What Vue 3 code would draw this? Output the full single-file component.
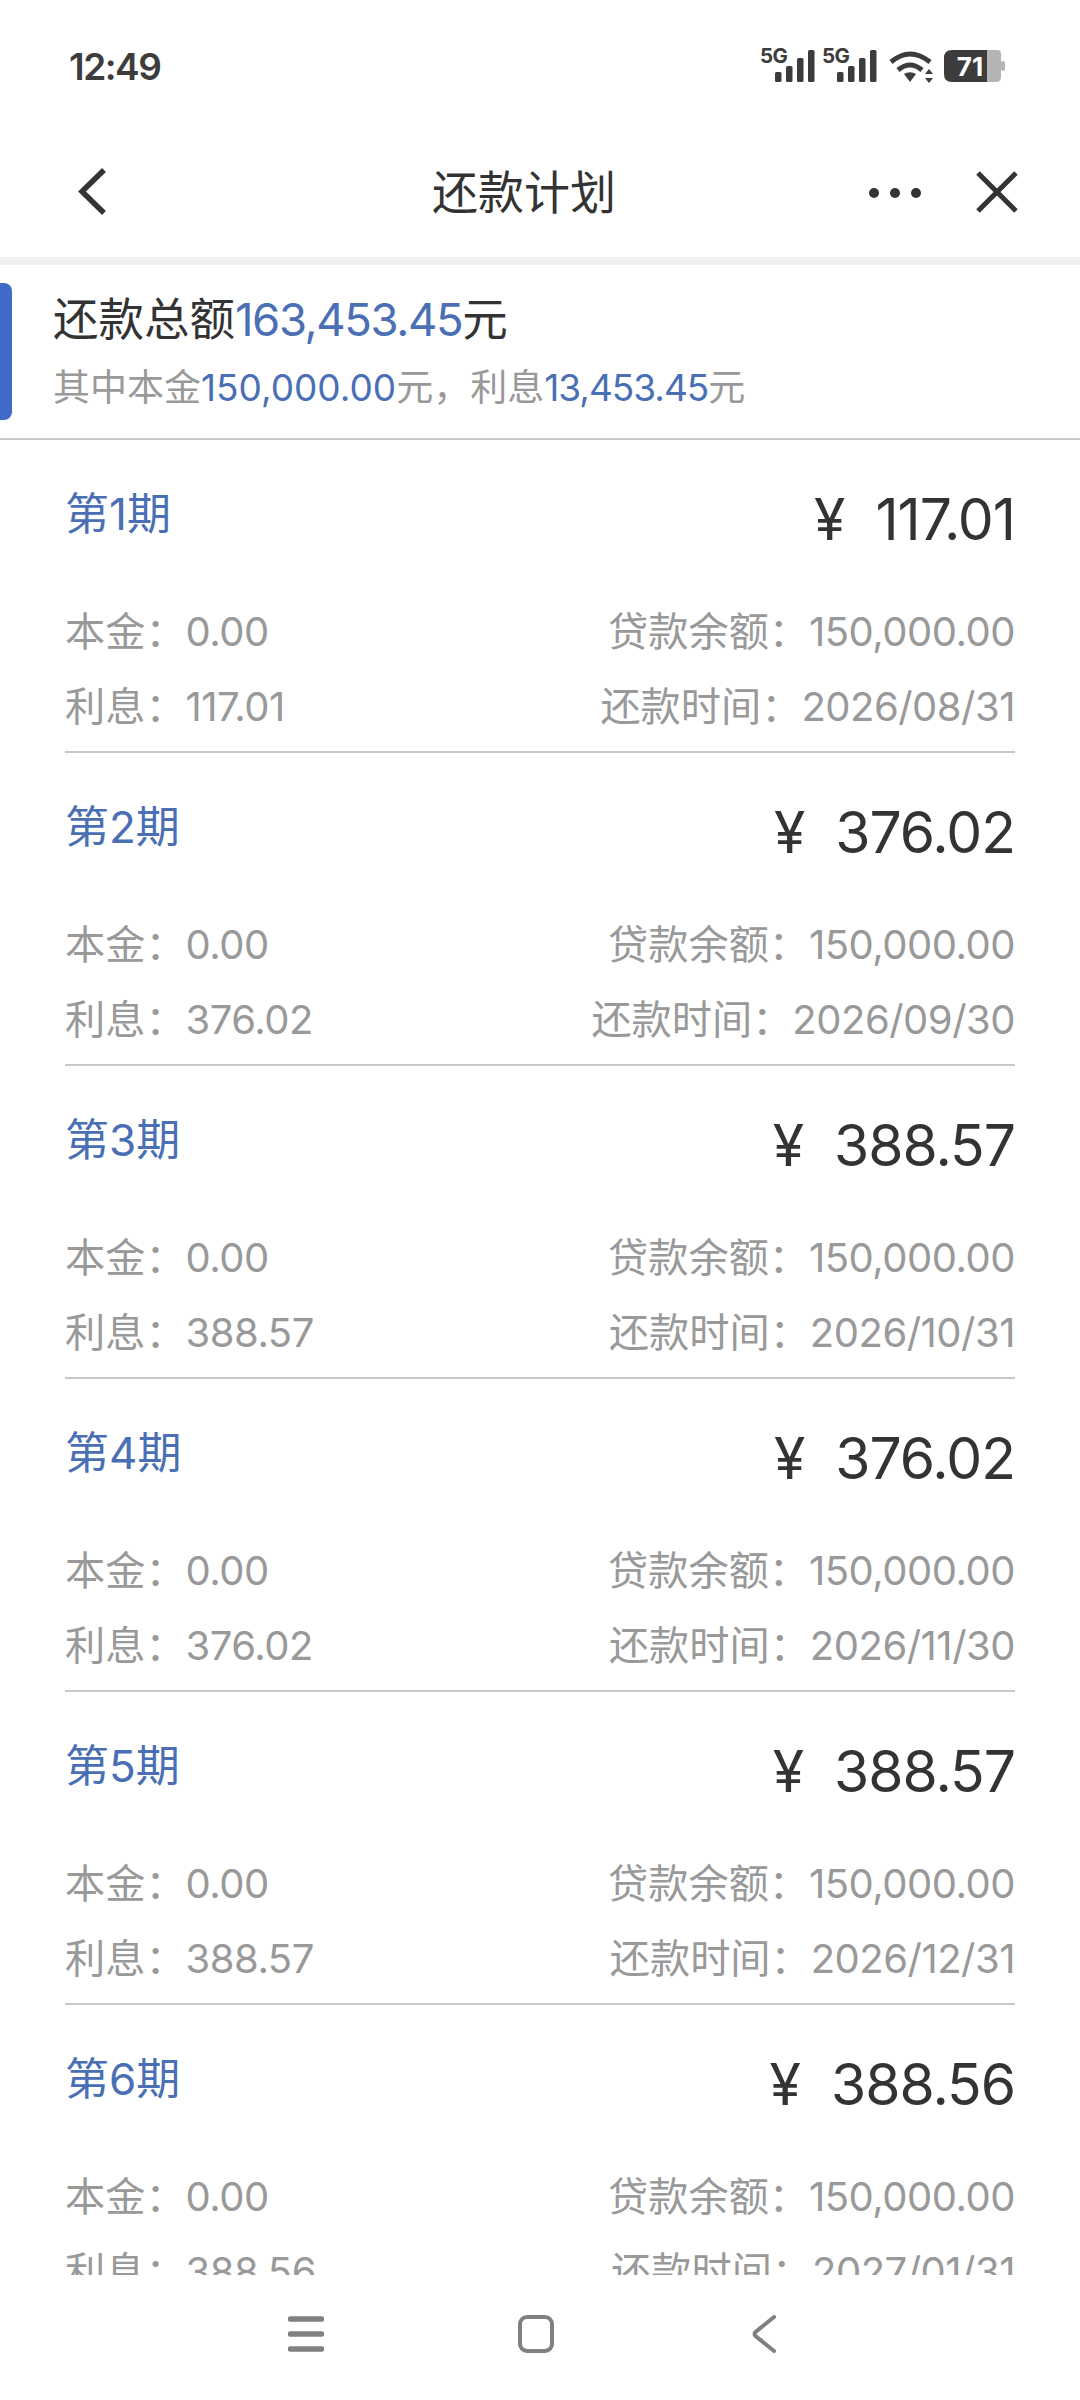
<script setup>
const rows = [
  { n: 1, amount: '117.01', date: '2026/08/31' },
  { n: 2, amount: '376.02', date: '2026/09/30' },
  { n: 3, amount: '388.57', date: '2026/10/31' },
  { n: 4, amount: '376.02', date: '2026/11/30' },
  { n: 5, amount: '388.57', date: '2026/12/31' },
  { n: 6, amount: '388.56', date: '2027/01/31' },
]
</script>

<template>
  <div class="screen">
    <header class="status">
      <span class="time">12:49</span>
      <svg class="status-icons" width="250" height="60" viewBox="760 35 250 60">
        <g fill="#3c3c3c">
          <text x="760" y="62" class="five-g">5G</text>
          <rect x="775" y="71" width="6.500" height="10" rx="1.500" />
          <rect x="786" y="65" width="6.500" height="16" rx="1.500" />
          <rect x="797" y="57" width="6.500" height="24" rx="1.500" />
          <rect x="808" y="49" width="6.500" height="32" rx="1.500" />
          <text x="822" y="62" class="five-g">5G</text>
          <rect x="837" y="71" width="6.500" height="10" rx="1.500" />
          <rect x="848" y="65" width="6.500" height="16" rx="1.500" />
          <rect x="859" y="57" width="6.500" height="24" rx="1.500" />
          <rect x="870" y="49" width="6.500" height="32" rx="1.500" />
          <path d="M904 73 Q910 69.500 916 73 L910 81 Z" />
          <path d="M925 73 L929 68 L933 73 Z" />
          <path d="M925 77 L933 77 L929 82 Z" />
        </g>
        <g fill="none" stroke="#3c3c3c" stroke-width="5">
          <path d="M891 61 Q910 45 930 61" />
          <path d="M898 69 Q910 59 922 69" />
        </g>
        <path d="M985 49 H998 Q1001 49 1001 54 V76 Q1001 81 996 81 H985 Z" fill="#b4b4b4" />
        <rect x="1001" y="60" width="4" height="10" rx="2" fill="#b4b4b4" />
        <path d="M952 49 H987 V81 H952 Q944 81 944 73 V57 Q944 49 952 49 Z" fill="#3c3c3c" />
        <text x="970" y="75" text-anchor="middle" class="battery-text">71</text>
      </svg>
    </header>

    <nav class="topbar">
      <svg class="back" width="28" height="47" viewBox="0 0 28 47">
        <path d="M26 2 L4 23.500 L26 45" fill="none" stroke="#333" stroke-width="5.500" />
      </svg>
      <h1 class="title">还款计划</h1>
      <svg class="more" width="52" height="10" viewBox="0 0 52 10">
        <circle cx="5" cy="5" r="5" fill="#333" />
        <circle cx="26" cy="5" r="5" fill="#333" />
        <circle cx="47" cy="5" r="5" fill="#333" />
      </svg>
      <svg class="close" width="42" height="42" viewBox="0 0 42 42">
        <path d="M2 2 L40 40 M40 2 L2 40" fill="none" stroke="#333" stroke-width="5" />
      </svg>
    </nav>

    <div class="band"></div>

    <section class="summary">
      <div class="bar"></div>
      <div class="summary-text">
        <p class="total">还款总额<span class="blue">163,453.45</span>元</p>
        <p class="breakdown">其中本金<span class="blue">150,000.00</span>元，利息<span class="blue interest">13,453.45</span>元</p>
      </div>
    </section>

    <main class="list">
      <article v-for="r in rows" :key="r.n" class="row">
        <div class="row-head">
          <span class="period">第{{ r.n }}期</span>
          <span class="amount"><span class="yen">¥</span>{{ r.amount }}</span>
        </div>
        <div class="detail">
          <span>本金：<span class="num">0.00</span></span>
          <span>贷款余额：<span class="num">150,000.00</span></span>
        </div>
        <div class="detail">
          <span>利息：<span class="num">{{ r.amount }}</span></span>
          <span>还款时间：<span class="num">{{ r.date }}</span></span>
        </div>
      </article>
    </main>

    <footer class="sysnav">
      <svg class="ic-menu" width="36" height="38" viewBox="0 0 36 38">
        <path d="M2.500 4 H33.500 M2.500 19 H33.500 M2.500 34 H33.500" stroke="#808080" stroke-width="5.500" stroke-linecap="round" fill="none" />
      </svg>
      <svg class="ic-home" width="36" height="38" viewBox="0 0 36 38">
        <rect x="2" y="2" width="32" height="34" rx="7" stroke="#808080" stroke-width="4" fill="none" />
      </svg>
      <svg class="ic-back" width="24" height="38" viewBox="0 0 24 38">
        <path d="M22 2 L3.500 17 Q1.500 19 3.500 21 L22 36" stroke="#808080" stroke-width="4" stroke-linecap="round" fill="none" />
      </svg>
    </footer>
  </div>
</template>

<style scoped>
.screen {
  width: 1080px;
  height: 2400px;
  background: #fff;
  display: flex;
  flex-direction: column;
  overflow: hidden;
  font-family: Inter, "Noto Sans CJK SC", sans-serif;
  color: #333;
}
.status {
  height: 132px;
  flex: none;
  display: flex;
  align-items: center;
  justify-content: space-between;
  padding-left: 69px;
  padding-right: 70px;
  box-sizing: border-box;
}
.time {
  font-size: 37px;
  font-weight: 600;
  color: #3c3c3c;
  letter-spacing: -1.500px;
}
.status-icons {
  display: block;
}
.five-g {
  font-size: 20.500px;
  font-weight: 700;
  letter-spacing: -0.500px;
  font-family: Inter, sans-serif;
}
.battery-text {
  font-size: 26px;
  font-weight: 700;
  fill: #fff;
  font-family: Inter, sans-serif;
}
.topbar {
  height: 125px;
  flex: none;
  display: flex;
  align-items: center;
  padding-left: 78px;
  padding-right: 62px;
  padding-bottom: 6px;
  box-sizing: border-box;
}
.title {
  margin: 0 0 0 326px;
  font-size: 46px;
  font-weight: 400;
  line-height: 60px;
  color: #333;
}
.more {
  margin-left: auto;
  margin-top: 3px;
}
.close {
  margin-left: 55px;
}
.band {
  height: 8px;
  flex: none;
  background: #efefef;
}
.summary {
  height: 175px;
  flex: none;
  display: flex;
  align-items: flex-start;
  border-bottom: 2px solid #c8c8c8;
  box-sizing: border-box;
}
.bar {
  width: 12px;
  height: 137px;
  margin-top: 18px;
  background: #4169c8;
  border-radius: 0 8px 8px 0;
}
.summary-text {
  margin-left: 41px;
  padding-top: 27px;
}
.total,
.breakdown {
  margin: 0;
  line-height: 56px;
}
.total {
  font-size: 45.500px;
  color: #333;
}
.total .blue {
  letter-spacing: -1.400px;
}
.breakdown {
  margin-top: 12px;
  font-size: 37px;
  color: #999;
}
.breakdown .interest {
  letter-spacing: -1px;
}
.blue {
  color: #4a6fb5;
}
.list {
  flex: 1;
  min-height: 0;
  overflow: hidden;
}
.row {
  height: 313px;
  margin: 0 65px;
  padding-top: 40px;
  box-sizing: border-box;
  border-bottom: 2px solid #c8c8c8;
}
.row-head {
  height: 80px;
  margin-bottom: 34px;
  display: flex;
  justify-content: space-between;
  align-items: flex-start;
}
.period {
  font-size: 44px;
  line-height: 68px;
  color: #4a6fb5;
}
.amount {
  font-size: 57px;
  line-height: 80px;
  color: #333;
  letter-spacing: -1px;
}
.yen {
  margin-right: 31px;
}
.detail {
  height: 75px;
  line-height: 75px;
  display: flex;
  justify-content: space-between;
  font-size: 40.200px;
  color: #999;
}
.num {
  font-size: 40px;
  letter-spacing: -0.500px;
}
.sysnav {
  height: 125px;
  flex: none;
  display: flex;
  align-items: center;
  padding-left: 288px;
  padding-bottom: 8px;
  box-sizing: border-box;
  background: #fff;
}
.ic-home {
  margin-left: 194px;
}
.ic-back {
  margin-left: 198px;
}
</style>
